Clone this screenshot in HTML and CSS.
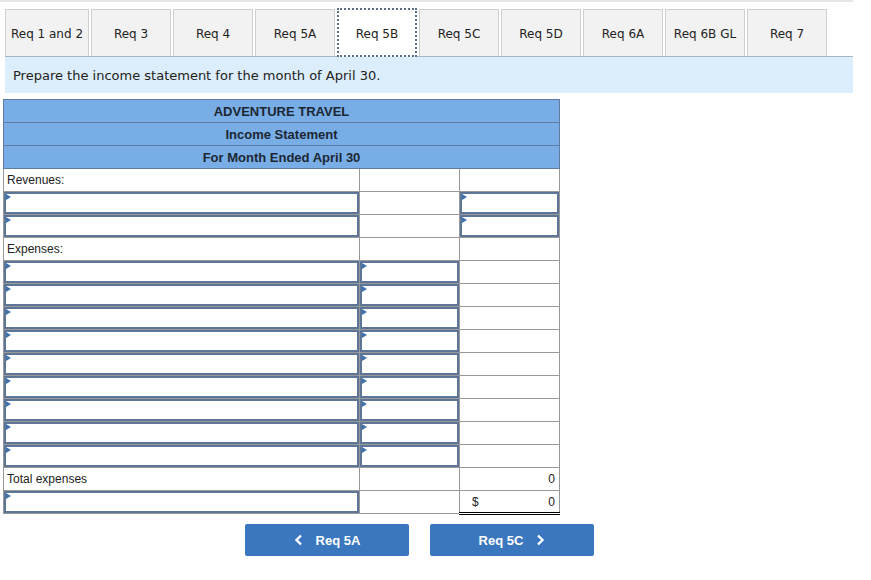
FILE: index.html
```html
<!DOCTYPE html>
<html>
<head>
<meta charset="utf-8">
<link rel="stylesheet" href="styles.css">
</head>
<body>
<div class="topbar"></div>
<div class="tabs">
  <div class="tab t1">Req 1 and 2</div>
  <div class="tab">Req 3</div>
  <div class="tab">Req 4</div>
  <div class="tab">Req 5A</div>
  <div class="tab active">Req 5B</div>
  <div class="tab">Req 5C</div>
  <div class="tab">Req 5D</div>
  <div class="tab">Req 6A</div>
  <div class="tab">Req 6B GL</div>
  <div class="tab">Req 7</div>
</div>
<div class="band">Prepare the income statement for the month of April 30.</div>

<table class="stmt">
  <tr><th colspan="3">ADVENTURE TRAVEL</th></tr>
  <tr><th colspan="3">Income Statement</th></tr>
  <tr><th colspan="3">For Month Ended April 30</th></tr>
  <tr><td class="c1 lbl">Revenues:</td><td class="c2"></td><td class="c3"></td></tr>
  <tr><td class="c1 in"><div class="box"></div></td><td class="c2"></td><td class="c3 in"><div class="box"></div></td></tr>
  <tr><td class="c1 in"><div class="box"></div></td><td class="c2"></td><td class="c3 in"><div class="box"></div></td></tr>
  <tr><td class="c1 lbl">Expenses:</td><td class="c2"></td><td class="c3"></td></tr>
  <tr><td class="c1 in"><div class="box"></div></td><td class="c2 in"><div class="box"></div></td><td class="c3"></td></tr>
  <tr><td class="c1 in"><div class="box"></div></td><td class="c2 in"><div class="box"></div></td><td class="c3"></td></tr>
  <tr><td class="c1 in"><div class="box"></div></td><td class="c2 in"><div class="box"></div></td><td class="c3"></td></tr>
  <tr><td class="c1 in"><div class="box"></div></td><td class="c2 in"><div class="box"></div></td><td class="c3"></td></tr>
  <tr><td class="c1 in"><div class="box"></div></td><td class="c2 in"><div class="box"></div></td><td class="c3"></td></tr>
  <tr><td class="c1 in"><div class="box"></div></td><td class="c2 in"><div class="box"></div></td><td class="c3"></td></tr>
  <tr><td class="c1 in"><div class="box"></div></td><td class="c2 in"><div class="box"></div></td><td class="c3"></td></tr>
  <tr><td class="c1 in"><div class="box"></div></td><td class="c2 in"><div class="box"></div></td><td class="c3"></td></tr>
  <tr><td class="c1 in"><div class="box"></div></td><td class="c2 in"><div class="box"></div></td><td class="c3"></td></tr>
  <tr><td class="c1 lbl">Total expenses</td><td class="c2 under"></td><td class="c3 num">0</td></tr>
  <tr><td class="c1 in"><div class="box"></div></td><td class="c2"></td><td class="c3 num total"><span class="dollar">$</span>0</td></tr>
</table>

<div class="nav">
  <button class="btn prev"><svg width="10" height="12" viewBox="0 0 10 12"><path d="M7 1.5 L2.5 6 L7 10.5" fill="none" stroke="#fff" stroke-width="2.4"/></svg><span>Req 5A</span></button>
  <button class="btn next"><span>Req 5C</span><svg width="10" height="12" viewBox="0 0 10 12"><path d="M3 1.5 L7.5 6 L3 10.5" fill="none" stroke="#fff" stroke-width="2.4"/></svg></button>
</div>
</body>
</html>
```
FILE: styles.css
```css
body {
  margin: 0;
  background: #fff;
  font-family: "DejaVu Sans", Verdana, sans-serif;
}
.topbar {
  height: 2px;
  width: 853px;
  background: #e6e6e6;
}
.tabs {
  display: flex;
  gap: 2px;
  margin: 7px 0 0 5px;
  height: 47px;
  position: relative;
  z-index: 1;
}
.tab {
  box-sizing: border-box;
  width: 80px;
  height: 47px;
  border: 1px solid #cfcfcf;
  border-bottom: none;
  background: #f2f2f2;
  font-size: 12px;
  color: #222;
  display: flex;
  align-items: center;
  justify-content: center;
  padding-top: 2px;
}
.tab.t1 { width: 84px; }
.tab.active {
  background: #fff;
  border: 2px dotted #5a6f86;
  height: 49px;
  margin-top: -1px;
  width: 80px;
}
.band {
  box-sizing: border-box;
  margin-left: 5px;
  width: 848px;
  height: 37px;
  background: #dcedfb;
  border-top: 1px solid #a9b4bf;
  font-size: 13px;
  color: #222;
  padding: 11px 0 0 8px;
}
.stmt {
  margin: 6px 0 0 3px;
  border-collapse: collapse;
  font-family: "Liberation Sans", Arial, sans-serif;
  font-size: 12px;
  color: #222;
}
.stmt th {
  height: 23px;
  padding: 0;
  background: #78ade6;
  border: 1px solid #5d7c9f;
  font-size: 13px;
  font-weight: bold;
  color: #1c2733;
  text-align: center;
  box-sizing: border-box;
}
.stmt td {
  height: 23px;
  padding: 0;
  border: 1px solid #999;
  box-sizing: border-box;
}
.c1 { width: 356px; }
.c2 { width: 100px; }
.c3 { width: 100px; }
.lbl { padding-left: 3px !important; }
.stmt td.in {
  border: 1px solid #999;
  padding: 0;
}
.box {
  box-sizing: border-box;
  height: 22px;
  border: 2px solid #5d7596;
  position: relative;
}
.box::before {
  content: "";
  position: absolute;
  left: 0;
  top: 0;
  border-left: 5px solid #3f72ad;
  border-top: 3px solid transparent;
  border-bottom: 3px solid transparent;
}
.num {
  text-align: right;
  padding-right: 4px !important;
}
.stmt td.under { border-top: 1px solid #000; }
.stmt td.total {
  border-top: 1px solid #000;
  border-bottom: 3px double #000;
}
.dollar {
  float: left;
  padding-left: 12px;
}
.nav {
  display: flex;
  gap: 21px;
  margin: 9px 0 0 245px;
}
.btn {
  width: 164px;
  height: 32px;
  border: none;
  border-radius: 2px;
  background: #3b77be;
  color: #fff;
  font-family: "Liberation Sans", Arial, sans-serif;
  font-weight: bold;
  font-size: 13px;
  display: flex;
  align-items: center;
  justify-content: center;
  gap: 12px;
  padding: 0;
}
```
